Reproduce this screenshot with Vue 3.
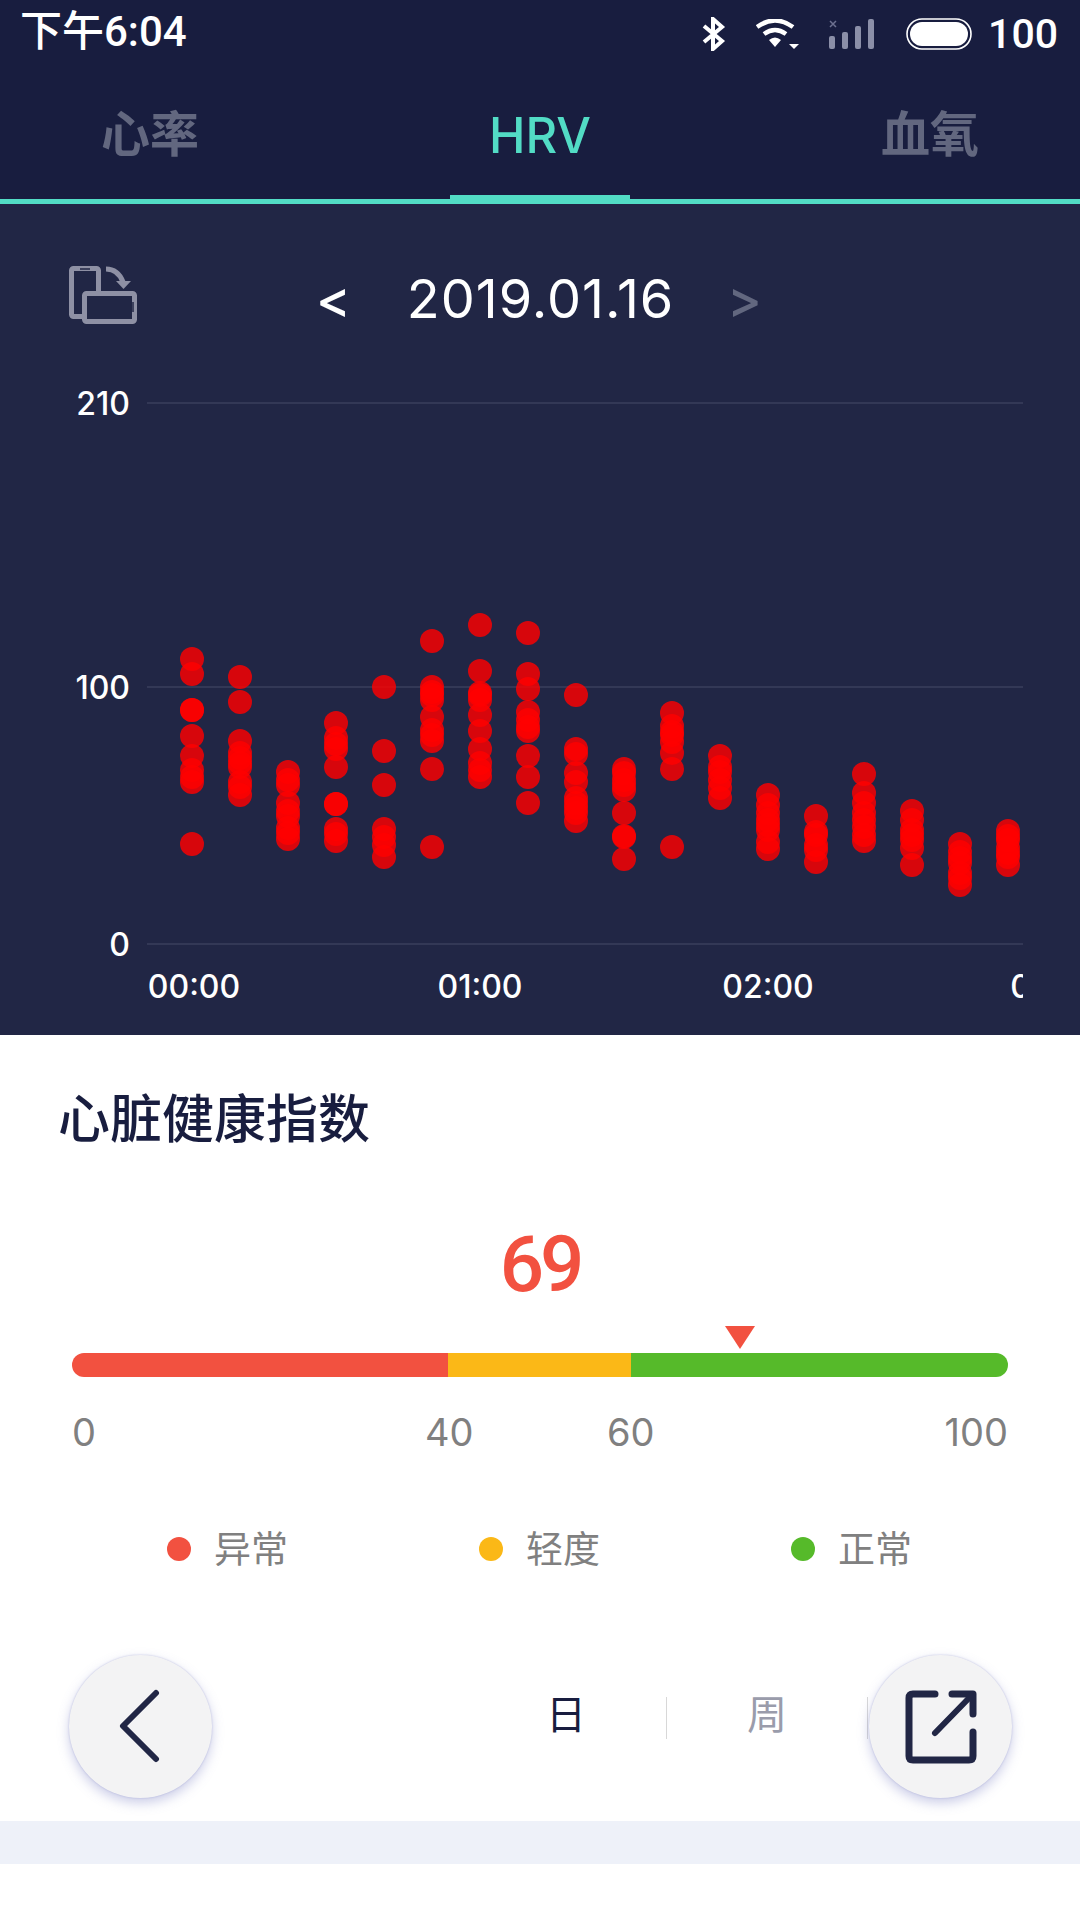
<script setup>
const tabs = [
  { label: '心率', cls: 'side' },
  { label: 'HRV', cls: 'active' },
  { label: '血氧', cls: 'side' },
]

const gridLines = [
  { label: '210', y: 403 },
  { label: '100', y: 687 },
  { label: '0', y: 944 },
]

const times = [
  { label: '00:00', x: 194 },
  { label: '01:00', x: 480 },
  { label: '02:00', x: 768 },
  { label: '03:00', x: 1056 },
]

// y values of each column of the scatter, one column every 48px
const columns = [
  [659, 674, 710, 710, 736, 756, 770, 777, 782, 844],
  [677, 702, 741, 753, 758, 763, 767, 782, 787, 795],
  [772, 780, 785, 803, 811, 816, 828, 833, 839],
  [723, 738, 744, 749, 767, 804, 804, 829, 834, 841],
  [687, 751, 785, 829, 837, 845, 857],
  [641, 687, 692, 695, 700, 717, 730, 735, 741, 769, 847],
  [625, 671, 693, 695, 700, 715, 731, 749, 763, 770, 777],
  [633, 674, 689, 712, 720, 727, 731, 756, 777, 803],
  [695, 749, 754, 773, 782, 798, 803, 808, 813, 821],
  [769, 773, 780, 785, 790, 813, 836, 837, 859],
  [713, 726, 732, 735, 742, 753, 769, 847],
  [756, 767, 772, 780, 788, 798],
  [795, 805, 813, 820, 825, 830, 842, 849],
  [816, 832, 835, 845, 850, 862],
  [774, 793, 803, 813, 820, 827, 835, 841],
  [811, 820, 830, 835, 840, 848, 865],
  [844, 852, 858, 863, 873, 878, 885],
  [831, 836, 840, 848, 853, 857, 865],
]

const dots = columns.flatMap((col, i) => col.map(y => ({ x: 192 + i * 48, y })))

const ticks = [
  { label: '0', cls: 't0' },
  { label: '40', cls: 't40' },
  { label: '60', cls: 't60' },
  { label: '100', cls: 't100' },
]

const legend = [
  { label: '异常', color: '#f25140' },
  { label: '轻度', color: '#fbb817' },
  { label: '正常', color: '#56ba2a' },
]
</script>

<template>
  <div class="page">
    <header class="top">
      <div class="status">
        <span class="clock">下午6:04</span>
        <div class="status-right">
          <svg class="bt" width="26" height="34" viewBox="0 0 26 34" fill="none" stroke="#fff" stroke-width="4">
            <path d="M3 9 21 24 12 32V2l9 8L3 25" />
          </svg>
          <svg class="wifi" width="44" height="30" viewBox="0 0 44 30">
            <path d="M1 8Q19-5 37 8" fill="none" stroke="#fff" stroke-width="4.5" />
            <path d="M8 15Q19 7 30 15" fill="none" stroke="#fff" stroke-width="4.5" />
            <path d="M13 21Q19 16 25 21L19 28Z" fill="#fff" />
            <path d="M33 25h10l-5 5Z" fill="#fff" />
          </svg>
          <svg class="signal" width="46" height="30" viewBox="0 0 46 30" fill="#8b8fa8">
            <path d="M1 2l6 6M7 2 1 8" stroke="#6d7190" stroke-width="1.5" />
            <rect x="0" y="17" width="6" height="13" rx="2" />
            <rect x="13" y="13" width="6" height="17" rx="2" />
            <rect x="26" y="7" width="6" height="23" rx="2" />
            <rect x="39" y="0" width="6" height="30" rx="2" />
          </svg>
          <svg class="battery" width="66" height="32" viewBox="0 0 66 32">
            <rect x="1" y="1" width="64" height="30" rx="15" fill="none" stroke="#fff" stroke-width="1.6" />
            <rect x="4" y="4" width="58" height="24" rx="12" fill="#fff" />
          </svg>
          <span class="level">100</span>
        </div>
      </div>
      <nav class="tabs">
        <div v-for="t in tabs" :key="t.label" class="tab" :class="t.cls">{{ t.label }}</div>
      </nav>
    </header>

    <section class="chart-box">
      <div class="date-row">
        <svg class="rotate" width="68" height="58" viewBox="0 0 68 58" fill="none" stroke="#8e90a4">
          <rect x="2.500" y="2.500" width="27" height="48" rx="2" stroke-width="5" />
          <path d="M11 3h10" stroke="#212645" stroke-width="1.5" />
          <rect x="15.500" y="27.500" width="50" height="28" rx="2" fill="#212645" stroke-width="5" />
          <path d="M64 36v10" stroke="#212645" stroke-width="1.5" />
          <path d="M37 3Q49 3 54 16" stroke-width="5" />
          <path d="M47 15h15l-7.500 8Z" fill="#8e90a4" stroke="none" />
        </svg>
        <span class="arrow prev">&lt;</span>
        <span class="date">2019.01.16</span>
        <span class="arrow next">&gt;</span>
      </div>
      <svg class="plot" width="1080" height="675" viewBox="0 360 1080 675">
        <defs>
          <clipPath id="plot-clip">
            <rect x="0" y="360" width="1023" height="675" />
          </clipPath>
        </defs>
        <g v-for="g in gridLines" :key="g.label">
          <line x1="147" x2="1023" :y1="g.y" :y2="g.y" stroke="#3a3f5c" stroke-width="1.500" />
          <text x="130" :y="g.y + 12" text-anchor="end" class="axis">{{ g.label }}</text>
        </g>
        <circle v-for="(d, i) in dots" :key="i" :cx="d.x" :cy="d.y" r="12" fill="#ff0000" fill-opacity="0.82" />
        <g clip-path="url(#plot-clip)">
          <text v-for="t in times" :key="t.label" :x="t.x" y="998" text-anchor="middle" class="axis">{{ t.label }}</text>
        </g>
      </svg>
    </section>

    <section class="panel">
      <h2 class="title">心脏健康指数</h2>
      <div class="score">69</div>
      <div class="bar-wrap">
        <span class="marker"></span>
        <div class="bar">
          <i class="seg red"></i>
          <i class="seg yellow"></i>
          <i class="seg green"></i>
        </div>
      </div>
      <div class="ticks">
        <span v-for="t in ticks" :key="t.label" :class="t.cls">{{ t.label }}</span>
      </div>
      <div class="legend">
        <div v-for="l in legend" :key="l.label" class="legend-item">
          <i class="legend-dot" :style="{ background: l.color }"></i>
          <span class="legend-text">{{ l.label }}</span>
        </div>
      </div>
      <div class="range">
        <span class="range-cell on">日</span>
        <span class="range-cell">周</span>
      </div>
      <button class="round back">
        <svg width="42" height="74" viewBox="0 0 42 74" fill="none" stroke="#212645" stroke-width="6" stroke-linecap="round" stroke-linejoin="round">
          <path d="M37 4 4 37l33 33" />
        </svg>
      </button>
      <button class="round share">
        <svg width="72" height="74" viewBox="0 0 72 74" fill="none" stroke="#212645" stroke-width="7" stroke-linecap="round" stroke-linejoin="round">
          <path d="M30 4H8Q4 4 4 8V66Q4 70 8 70H64Q68 70 68 66V42" />
          <path d="M47 4H68V24" />
          <path d="M30 43 66 6" stroke-width="6" />
        </svg>
      </button>
    </section>

    <div class="band"></div>
  </div>
</template>

<style scoped>
.page {
  width: 1080px;
  height: 1920px;
  background: #fff;
  overflow: hidden;
  font-family: Inter, "Noto Sans CJK SC", sans-serif;
}

.top {
  background: #181d3f;
  height: 204px;
  border-bottom: 5px solid #52dcc5;
  box-sizing: border-box;
}

.status {
  height: 68px;
  display: flex;
  align-items: center;
  justify-content: space-between;
  padding: 0 22px 0 20px;
  color: #fff;
  font-family: Roboto, "Noto Sans CJK SC", sans-serif;
}

.clock {
  font-size: 42px;
  line-height: 60px;
  margin-top: -4px;
  font-weight: 500;
}

.status-right {
  display: flex;
  align-items: center;
}

.bt { margin-right: 29px; }
.wifi { margin-right: 29px; }
.signal { margin-right: 31px; }
.battery { margin-right: 16px; }

.level {
  font-size: 41px;
  font-weight: 500;
}

.tabs {
  display: flex;
  height: 131px;
}

.tab {
  display: flex;
  align-items: center;
  justify-content: center;
  position: relative;
  font-size: 49px;
  font-weight: 500;
  color: #62677f;
  padding-top: 4px;
  box-sizing: border-box;
}

.tab.side {
  width: 300px;
  padding-top: 0;
  padding-bottom: 6px;
  font-weight: 700;
}

.tab.active {
  width: 480px;
  color: #52dcc5;
}

.tab.active::after {
  content: "";
  position: absolute;
  left: 150px;
  right: 150px;
  bottom: 0;
  height: 4px;
  background: #52dcc5;
}

.chart-box {
  height: 831px;
  background: #212645;
}

.date-row {
  height: 156px;
  padding-top: 70px;
  box-sizing: border-box;
  display: flex;
  align-items: center;
  padding-left: 69px;
  padding-bottom: 36px;
}

.rotate {
  margin-top: -8px;
}

.arrow {
  font-size: 52px;
  font-weight: 500;
  color: #fff;
  line-height: 58px;
}

.prev { margin-left: 179px; }
.next { color: #62677f; margin-left: 53px; }

.date {
  font-size: 54px;
  letter-spacing: 1px;
  color: #fff;
  margin-left: 56px;
  line-height: 58px;
}

.plot {
  display: block;
}

.axis {
  font-family: Inter, sans-serif;
  font-size: 32px;
  font-weight: 500;
  fill: #fff;
}

.panel {
  position: relative;
  height: 786px;
  background: #fff;
  overflow: hidden;
}

.title {
  margin: 55px 0 0 58px;
  font-size: 52px;
  line-height: 60px;
  font-weight: 500;
  color: #181d3f;
}

.score {
  margin-top: 75px;
  margin-bottom: -3px;
  text-align: center;
  font-family: Roboto, sans-serif;
  font-size: 78px;
  line-height: 80px;
  letter-spacing: -4px;
  font-weight: 500;
  color: #f25140;
}

.bar-wrap {
  position: relative;
  margin: 51px 72px 0;
}

.marker {
  position: absolute;
  left: 653px;
  top: -27px;
  width: 0;
  height: 0;
  border-left: 15.500px solid transparent;
  border-right: 15.500px solid transparent;
  border-top: 23px solid #f25140;
}

.bar {
  display: flex;
  height: 24px;
  border-radius: 12px;
  overflow: hidden;
}

.seg { display: block; }
.red { width: 376px; background: #f25140; }
.yellow { width: 183px; background: #fbb817; }
.green { flex: 1; background: #56ba2a; }

.ticks {
  display: flex;
  margin: 35px 72px 0 72px;
  font-size: 38px;
  line-height: 40px;
  color: #808080;
}

.t0 { width: 353px; }
.t40 { width: 48px; }
.t60 { width: 48px; margin-left: 134px; }
.t100 { margin-left: auto; }

.legend {
  display: flex;
  margin: 72px 0 0 167px;
  height: 50px;
}

.legend-item {
  flex: none;
  width: 312px;
  display: flex;
  align-items: center;
  gap: 23px;
  font-size: 37px;
  color: #808080;
}

.legend-text {
  margin-top: -4px;
}

.legend-dot {
  display: block;
  width: 24px;
  height: 24px;
  border-radius: 50%;
}

.range {
  display: flex;
  margin: 123px 0 0 466px;
}

.range-cell {
  width: 201px;
  height: 42px;
  line-height: 36px;
  text-align: center;
  font-size: 40px;
  color: #9a9cab;
  border-right: 1.500px solid #d8d8d8;
  box-sizing: border-box;
}

.range-cell.on {
  color: #181d3f;
}

.round {
  position: absolute;
  top: 620px;
  width: 143px;
  height: 143px;
  padding: 0;
  border: 0;
  border-radius: 50%;
  background: #f3f3f4;
  box-shadow: 0 5px 12px rgba(110, 115, 190, 0.35), 0 0 2px rgba(110, 115, 190, 0.4);
  display: flex;
  align-items: center;
  justify-content: center;
}

.back { left: 69px; padding-left: 2px; padding-bottom: 2px; padding-right: 4px; }
.share { left: 869px; }

.band {
  height: 43px;
  background: #eef1f9;
}
</style>

<style>
html, body {
  margin: 0;
  padding: 0;
}
</style>
